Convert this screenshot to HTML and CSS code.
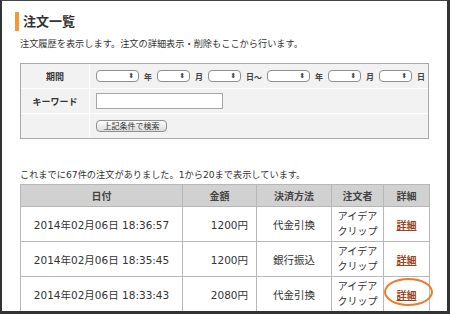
FILE: index.html
```html
<!DOCTYPE html>
<html lang="ja">
<head>
    <meta charset="UTF-8">
    <meta name="viewport" content="width=device-width, initial-scale=1.0">
    <title>注文一覧</title>
    <link rel="stylesheet" href="styles.css">
</head>
<body>
    <div class="page">
        <h2 class="heading">注文一覧</h2>
        <p class="lead">注文履歴を表示します。注文の詳細表示・削除もここから行います。</p>

        <table class="search">
            <tr>
                <th>期間</th>
                <td>
                    <div class="period">
                        <span class="sel year"><span class="arrows">⬍</span></span><span class="unit">年</span>
                        <span class="sel"><span class="arrows">⬍</span></span><span class="unit">月</span>
                        <span class="sel"><span class="arrows">⬍</span></span><span class="unit wide">日～</span>
                        <span class="sel year"><span class="arrows">⬍</span></span><span class="unit">年</span>
                        <span class="sel"><span class="arrows">⬍</span></span><span class="unit">月</span>
                        <span class="sel"><span class="arrows">⬍</span></span><span class="unit">日</span>
                    </div>
                </td>
            </tr>
            <tr>
                <th>キーワード</th>
                <td><input type="text" class="keyword"></td>
            </tr>
            <tr>
                <th></th>
                <td><button class="search-btn">上記条件で検索</button></td>
            </tr>
        </table>

        <p class="count">これまでに67件の注文がありました。1から20まで表示しています。</p>

        <table class="orders">
            <colgroup>
                <col class="c-date">
                <col class="c-amount">
                <col class="c-pay">
                <col class="c-user">
                <col class="c-detail">
            </colgroup>
            <thead>
                <tr>
                    <th>日付</th>
                    <th>金額</th>
                    <th>決済方法</th>
                    <th>注文者</th>
                    <th>詳細</th>
                </tr>
            </thead>
            <tbody>
                <tr>
                    <td>2014年02月06日 18:36:57</td>
                    <td class="amount">1200円</td>
                    <td>代金引換</td>
                    <td class="user">アイデア<br>クリップ</td>
                    <td><a href="#">詳細</a></td>
                </tr>
                <tr>
                    <td>2014年02月06日 18:35:45</td>
                    <td class="amount">1200円</td>
                    <td>銀行振込</td>
                    <td class="user">アイデア<br>クリップ</td>
                    <td><a href="#">詳細</a></td>
                </tr>
                <tr>
                    <td>2014年02月06日 18:33:43</td>
                    <td class="amount">2080円</td>
                    <td>代金引換</td>
                    <td class="user">アイデア<br>クリップ</td>
                    <td class="marked"><a href="#">詳細</a><span class="circle"></span></td>
                </tr>
                <tr class="more">
                    <td></td>
                    <td></td>
                    <td></td>
                    <td></td>
                    <td></td>
                </tr>
            </tbody>
        </table>
    </div>
</body>
</html>
```

FILE: styles.css
```css
* {
    margin: 0;
    padding: 0;
    box-sizing: border-box;
}

body {
    background: white;
    font-family: "DejaVu Sans", "Noto Sans CJK JP", sans-serif;
    font-size: 9.2px;
    color: #333;
}

.page {
    width: 450px;
    height: 314px;
    border-top: 1px solid #444;
    border-left: 2px solid #333;
    border-right: 3px solid #333;
    border-bottom: 3px solid #333;
    padding-left: 18px;
    overflow: hidden;
    background: white;
}

.heading {
    margin: 11px 0 0 -5px;
    height: 19px;
    line-height: 19px;
    border-left: 4px solid #f39a35;
    padding-left: 4px;
    font-size: 13px;
    font-weight: bold;
    color: #333;
}

.lead {
    margin-top: 6px;
    line-height: 14px;
}

/* search form */
.search {
    margin-top: 12px;
    width: 409px;
    border: 1px solid #a9a9a9;
    border-spacing: 0;
    background: #f2f2f2;
}

.search th,
.search td {
    height: 25px;
    border-bottom: 1px solid #fff;
    vertical-align: middle;
}

.search tr:last-child th,
.search tr:last-child td {
    height: 24px;
    border-bottom: none;
}

.search th {
    width: 69px;
    border-right: 1px solid #fff;
    font-size: 9px;
    font-weight: bold;
    text-align: center;
}

.search td {
    padding-left: 6px;
}

.period {
    display: flex;
    align-items: center;
    gap: 5px;
}

.sel {
    display: inline-flex;
    align-items: center;
    justify-content: flex-end;
    width: 33px;
    height: 12px;
    background: white;
    border: 1px solid #8f8f8f;
    border-radius: 4px;
    padding-right: 4px;
}

.sel.year {
    width: 43px;
}

.arrows {
    font-size: 7px;
    line-height: 1;
    color: #444;
}

.unit {
    width: 8px;
    font-size: 8px;
    font-weight: bold;
    color: #444;
}

.unit.wide {
    width: 16px;
}

.keyword {
    display: block;
    width: 127px;
    height: 16px;
    border: 1px solid #a6a6a6;
    background: white;
}

.search-btn {
    display: block;
    width: 71px;
    height: 12px;
    border: 1px solid #8f8f8f;
    border-radius: 4px;
    background: linear-gradient(#fdfdfd, #dcdcdc);
    font-family: "Noto Sans CJK JP", sans-serif;
    font-size: 8px;
    line-height: 10px;
    color: #333;
}

.count {
    margin-top: 29px;
    line-height: 14px;
}

/* order list */
.orders {
    margin-top: 2px;
    width: 409px;
    table-layout: fixed;
    border-collapse: collapse;
    font-size: 10.5px;
}

.c-date { width: 162px; }
.c-amount { width: 74px; }
.c-pay { width: 75px; }
.c-user { width: 52px; }
.c-detail { width: 46px; }

.orders th,
.orders td {
    border: 1px solid #b7b7b7;
    text-align: center;
    vertical-align: middle;
}

.orders th {
    height: 22px;
    background: #d1d1d1;
    font-size: 10px;
    font-weight: bold;
    color: #444;
}

.orders td {
    height: 35px;
    color: #333;
}

.orders td.amount {
    text-align: right;
    padding-right: 8px;
}

.orders td.user {
    line-height: 15px;
    font-size: 10px;
}

.orders a {
    color: #9a4420;
    font-weight: bold;
    font-size: 10px;
}

.marked {
    position: relative;
}

.circle {
    position: absolute;
    left: 0;
    top: 1px;
    width: 49px;
    height: 28px;
    border: 2px solid #ec7b2d;
    border-radius: 50%;
}
```
